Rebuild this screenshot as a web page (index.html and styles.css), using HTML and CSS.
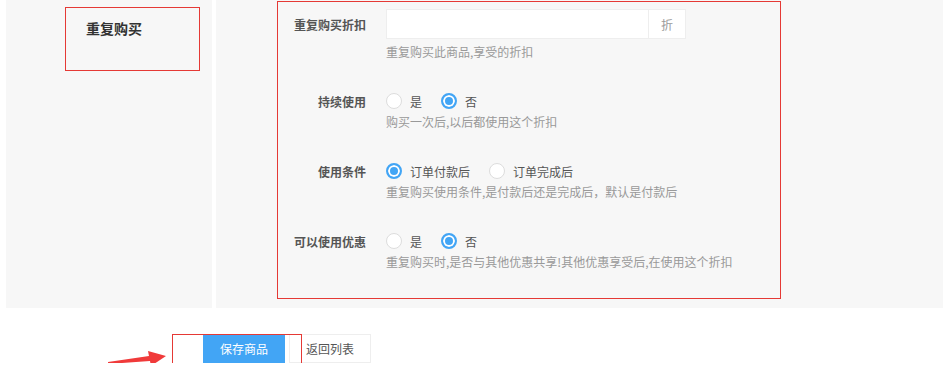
FILE: index.html
```html
<!DOCTYPE html>
<html lang="zh-CN">
<head>
<meta charset="utf-8">
<title>重复购买</title>
<link rel="stylesheet" href="styles.css">
</head>
<body>
<div class="main">
  <aside class="side">
    <div class="side-box">重复购买</div>
  </aside>
  <section class="content">
    <div class="form-box">
      <div class="group">
        <div class="row">
          <label class="label">重复购买折扣</label>
          <div class="input-group">
            <div class="input"></div>
            <span class="addon">折</span>
          </div>
        </div>
        <div class="help help-first">重复购买此商品,享受的折扣</div>
      </div>
      <div class="group">
        <div class="row row-radio">
          <label class="label">持续使用</label>
          <span class="opt"><i class="radio"></i>是</span>
          <span class="opt"><i class="radio on"></i>否</span>
        </div>
        <div class="help">购买一次后,以后都使用这个折扣</div>
      </div>
      <div class="group">
        <div class="row row-radio">
          <label class="label">使用条件</label>
          <span class="opt"><i class="radio on"></i>订单付款后</span>
          <span class="opt"><i class="radio"></i>订单完成后</span>
        </div>
        <div class="help">重复购买使用条件,是付款后还是完成后，默认是付款后</div>
      </div>
      <div class="group">
        <div class="row row-radio">
          <label class="label">可以使用优惠</label>
          <span class="opt"><i class="radio"></i>是</span>
          <span class="opt"><i class="radio on"></i>否</span>
        </div>
        <div class="help">重复购买时,是否与其他优惠共享!其他优惠享受后,在使用这个折扣</div>
      </div>
    </div>
  </section>
</div>
<div class="footer">
  <svg class="arrow" width="70" height="24" viewBox="0 0 70 24">
    <polygon points="0,13 41,7 40,2 58,7 43,17 42,12 0,15" fill="#f03a3a"/>
  </svg>
  <div class="mark"></div>
  <button class="btn btn-primary">保存商品</button>
  <button class="btn btn-default">返回列表</button>
</div>
</body>
</html>
```
FILE: styles.css
```css
* { box-sizing: border-box; }
body {
  margin: 0;
  background: #fff;
  font-family: "Noto Sans CJK SC", "Noto Sans", sans-serif;
  color: #333;
}
.main {
  display: flex;
  height: 308px;
  padding-left: 6px;
  gap: 4px;
}
.side {
  width: 206px;
  background: #f7f7f7;
  padding: 7px 0 0 59px;
}
.side-box {
  width: 135px;
  height: 64px;
  border: 1px solid #e53935;
  padding: 10px 0 0 20px;
  font-size: 14px;
  font-weight: bold;
  line-height: 20px;
  color: #333;
}
.content {
  flex: 1;
  background: #f7f7f7;
  padding: 1px 0 0 61px;
}
.form-box {
  width: 504px;
  height: 298px;
  border: 1px solid #e53935;
  padding-top: 7px;
}
.group { margin-bottom: 28px; }
.row {
  display: flex;
  align-items: center;
  height: 30px;
}
.row-radio { height: 24px; }
.label {
  width: 88px;
  text-align: right;
  font-size: 12px;
  font-weight: bold;
  color: #555;
  margin-right: 20px;
}
.input-group {
  display: flex;
  width: 300px;
  height: 30px;
  border: 1px solid #eee;
  background: #fff;
}
.input { flex: 1; }
.addon {
  width: 37px;
  border-left: 1px solid #eee;
  display: flex;
  align-items: center;
  justify-content: center;
  font-size: 12px;
  color: #999;
}
.help {
  margin-left: 108px;
  font-size: 12px;
  line-height: 18px;
  color: #999;
}
.help-first { margin-top: 4px; }
.opt {
  display: flex;
  align-items: center;
  font-size: 12px;
  color: #555;
  margin-right: 19px;
}
.radio {
  width: 16px;
  height: 16px;
  border-radius: 50%;
  border: 1px solid #ddd;
  background: #fff;
  margin-right: 8px;
}
.radio.on {
  border: 2px solid #42a5f5;
  background: #42a5f5;
  box-shadow: inset 0 0 0 2px #fff;
}
.footer {
  position: relative;
  display: flex;
  gap: 4px;
  margin-top: 26px;
  padding-left: 203px;
}
.btn {
  height: 29px;
  width: 82px;
  font-family: inherit;
  font-size: 12px;
  border: 1px solid #eee;
  padding: 0;
}
.btn-primary {
  background: #42a5f5;
  border-color: #42a5f5;
  color: #fff;
}
.btn-default {
  width: 82px;
  background: #fff;
  color: #555;
}
.mark {
  position: absolute;
  left: 172px;
  top: 0;
  width: 130px;
  height: 31px;
  border: 1px solid #e53935;
  z-index: 2;
}
.arrow {
  position: absolute;
  left: 108px;
  top: 15px;
}
```
